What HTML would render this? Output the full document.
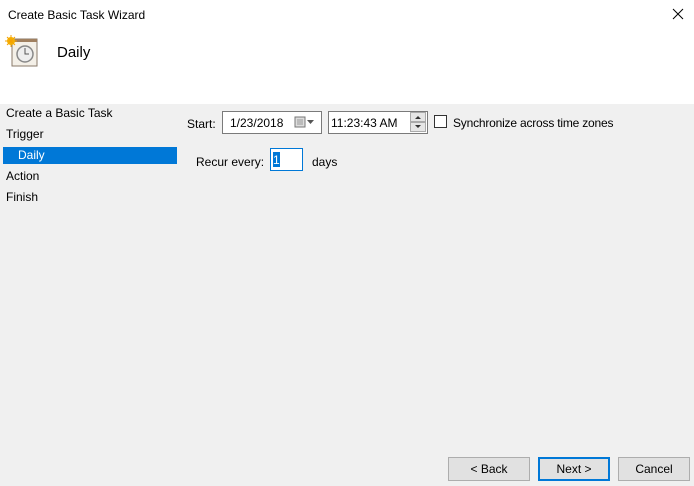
<!DOCTYPE html>
<html><head><style>
*{box-sizing:border-box;margin:0;padding:0}
body{width:694px;height:486px;background:#f0f0f0;font-family:"Liberation Sans",sans-serif;font-size:12px;color:#000;position:relative;overflow:hidden}
.a{position:absolute;white-space:nowrap}
.top{position:absolute;left:0;top:0;width:694px;height:104px;background:#fff}
.box{position:absolute;background:#fff;border:1px solid #7a7a7a}
.btn{position:absolute;top:457px;height:24px;width:72px;background:#e1e1e1;border:1px solid #adadad;text-align:center;line-height:22px}
</style></head><body>
<div class="top"></div>
<div class="a" style="left:8px;top:8px">Create Basic Task Wizard</div>
<svg class="a" style="left:672px;top:8px" width="12" height="12"><path d="M1 1l10 10M11 1L1 11" stroke="#000" stroke-width="1"/></svg>
<svg class="a" style="left:5px;top:35px" width="34" height="34" viewBox="0 0 34 34">
<rect x="7" y="4" width="25" height="27" fill="#f4f0e8" stroke="#8a7a6a"/>
<rect x="7" y="4" width="25" height="3" fill="#a08060"/>
<circle cx="20" cy="19" r="8" fill="#eee" stroke="#888" stroke-width="1.5"/>
<path d="M20 13v6h4" stroke="#555" fill="none"/>
<circle cx="6" cy="6" r="4" fill="#f5b800"/>
<path d="M6 0v12M0 6h12M2 2l8 8M10 2l-8 8" stroke="#f5a000" stroke-width="1"/>
</svg>
<div class="a" style="left:57px;top:44px;font-size:15px">Daily</div>
<div class="a" style="left:6px;top:106px">Create a Basic Task</div>
<div class="a" style="left:6px;top:127px">Trigger</div>
<div class="a" style="left:3px;top:147px;width:174px;height:17px;background:#0078d7"></div>
<div class="a" style="left:18px;top:148px;color:#fff">Daily</div>
<div class="a" style="left:6px;top:169px">Action</div>
<div class="a" style="left:6px;top:190px">Finish</div>
<div class="a" style="left:187px;top:117px">Start:</div>
<div class="box" style="left:222px;top:111px;width:100px;height:23px"></div>
<div class="a" style="left:230px;top:116px">1/23/2018</div>
<svg class="a" style="left:294px;top:116px" width="24" height="12"><rect x="1" y="1" width="10" height="10" fill="#ddd" stroke="#777"/><path d="M3 4h6M3 6h6M3 8h6" stroke="#999"/><path d="M13 4h7l-3.5 4z" fill="#555"/></svg>
<div class="box" style="left:328px;top:111px;width:100px;height:23px"></div>
<div class="a" style="left:331px;top:116px">11:23:43 AM</div>
<div class="a" style="left:410px;top:112px;width:16px;height:10px;background:#e6e6e6;border:1px solid #aaa"></div>
<div class="a" style="left:410px;top:122px;width:16px;height:10px;background:#e6e6e6;border:1px solid #aaa"></div>
<svg class="a" style="left:410px;top:112px" width="16" height="20"><path d="M5 7l3-3 3 3z M5 13l3 3 3-3z" fill="#333"/></svg>
<div class="box" style="left:434px;top:115px;width:13px;height:13px;border-color:#333"></div>
<div class="a" style="left:453px;top:116px;letter-spacing:-0.2px">Synchronize across time zones</div>
<div class="a" style="left:196px;top:155px">Recur every:</div>
<div class="box" style="left:270px;top:148px;width:33px;height:23px;border-color:#0078d7"></div>
<div class="a" style="left:273px;top:152px;width:7px;height:15px;background:#0078d7"></div>
<div class="a" style="left:273px;top:153px;color:#fff">1</div>
<div class="a" style="left:312px;top:155px">days</div>
<div class="btn" style="left:448px;width:82px">&lt; Back</div>
<div class="btn" style="left:538px;border:2px solid #0078d7;line-height:20px">Next &gt;</div>
<div class="btn" style="left:618px">Cancel</div>
</body></html>
